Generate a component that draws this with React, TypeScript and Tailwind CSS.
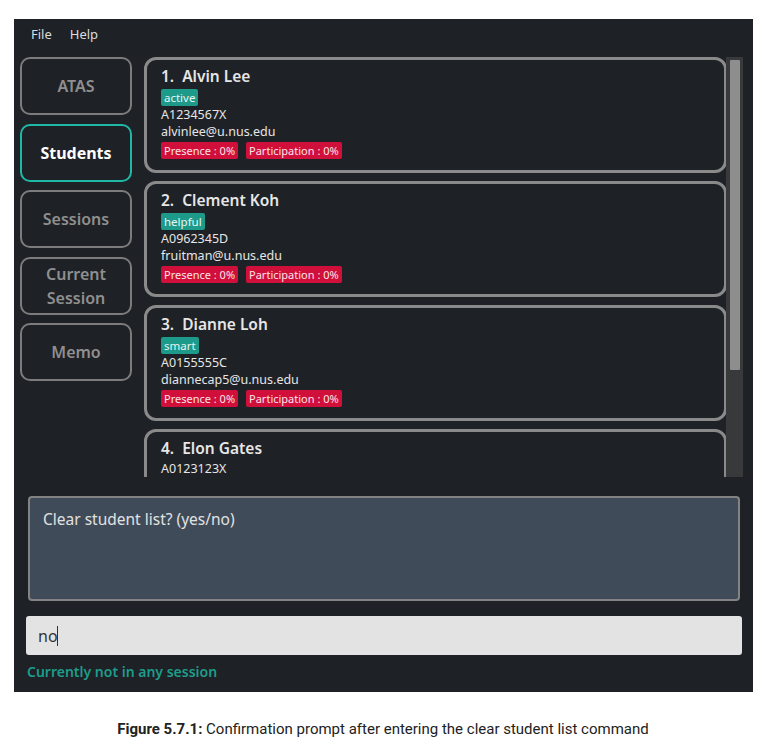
import React from "react";

const students = [
  { n: 1, name: "Alvin Lee", tag: "active", id: "A1234567X", email: "alvinlee@u.nus.edu" },
  { n: 2, name: "Clement Koh", tag: "helpful", id: "A0962345D", email: "fruitman@u.nus.edu" },
  { n: 3, name: "Dianne Loh", tag: "smart", id: "A0155555C", email: "diannecap5@u.nus.edu" },
];

function NavButton({ children, active }: { children: React.ReactNode; active?: boolean }) {
  return (
    <div
      className={
        active
          ? "h-[58px] w-[112px] rounded-[10px] border-[2px] border-[#1fb8a6] flex items-center justify-center text-center text-[16px] font-bold text-white leading-[24px]"
          : "h-[58px] w-[112px] rounded-[10px] border-[2px] border-[#7c7c7c] flex items-center justify-center text-center text-[16px] font-semibold text-[#8f8f8f] leading-[24px]"
      }
    >
      {children}
    </div>
  );
}

function Card({ s }: { s: (typeof students)[number] }) {
  return (
    <div className="h-[116px] shrink-0 rounded-[12px] border-[3px] border-[#8a8a8a] pl-[14px] pt-[6px] text-[#e6e6e6]">
      <div className="text-[15.5px] font-semibold leading-[20px] whitespace-pre">{`${s.n}.  ${s.name}`}</div>
      <div className="mt-[3px] flex">
        <span className="h-[17px] rounded-[2px] bg-[#1d9a89] px-[3px] text-[11.5px] leading-[17px] text-[#e8f5f3]">{s.tag}</span>
      </div>
      <div className="text-[12.5px] leading-[17px]">{s.id}</div>
      <div className="text-[12.5px] leading-[17px]">{s.email}</div>
      <div className="mt-[2px] flex gap-[8px]">
        <span className="h-[17px] rounded-[2px] bg-[#d0103a] px-[3px] text-[11px] leading-[17px] text-[#fbe3e8]">Presence : 0%</span>
        <span className="h-[17px] rounded-[2px] bg-[#d0103a] px-[3px] text-[11px] leading-[17px] text-[#fbe3e8]">Participation : 0%</span>
      </div>
    </div>
  );
}

export default function App() {
  return (
    <div className="w-[766px] h-[748px] bg-white pt-[19px] pl-[14px]" style={{ fontFamily: '"Noto Sans", "Open Sans", sans-serif' }}>
      <div className="w-[739px] h-[673px] bg-[#1e2125] flex flex-col">
        <div className="h-[30px] flex items-center gap-[18px] pl-[17px] pt-[2px] text-[13px] text-[#dcdcdc]">
          <span>File</span>
          <span>Help</span>
        </div>
        <div className="flex mt-[8px] pl-[6px] h-[420px]">
          <div className="flex flex-col gap-[8.5px] w-[112px]">
            <NavButton>ATAS</NavButton>
            <NavButton active>Students</NavButton>
            <NavButton>Sessions</NavButton>
            <NavButton>
              Current
              <br />
              Session
            </NavButton>
            <NavButton>Memo</NavButton>
          </div>
          <div className="ml-[12px] flex-1 flex overflow-hidden">
            <div className="w-[583px] flex flex-col gap-[8px] overflow-hidden">
              {students.map((s) => (
                <Card key={s.n} s={s} />
              ))}
              <div className="h-[116px] shrink-0 rounded-[12px] border-[3px] border-[#8a8a8a] pl-[14px] pt-[6px] text-[#e6e6e6]">
                <div className="text-[15.5px] font-semibold leading-[20px] whitespace-pre">{"4.  Elon Gates"}</div>
                <div className="text-[12.5px] leading-[17px] mt-[2px]">A0123123X</div>
              </div>
            </div>
            <div className="w-[17px] ml-[-1px] bg-[#38393b] pt-[3px] flex justify-center">
              <div className="w-[10px] h-[310px] bg-[#8e8e8e] rounded-[1px]" />
            </div>
          </div>
        </div>
        <div className="mt-[19px] ml-[14px] w-[712px] h-[105px] rounded-[4px] border-[2px] border-[#838383] bg-[#3f4b58] px-[13px] pt-[10px] text-[15.5px] leading-[22px] text-[#e2e2e2]">
          Clear student list? (yes/no)
        </div>
        <div className="mt-[15px] ml-[12px] w-[716px] h-[39px] rounded-[3px] bg-[#e3e3e3] flex items-center pl-[12px] text-[16px] text-[#333]">
          <span>no</span>
          <span className="w-[1px] h-[20px] bg-[#333] ml-[-1px]" />
        </div>
        <div className="mt-[7px] ml-[13px] text-[14px] font-semibold leading-[20px] text-[#1e9c8b]">Currently not in any session</div>
      </div>
      <div className="mt-[26px] ml-[-14px] w-[766px] text-center text-[15px] text-[#222]" style={{ fontFamily: 'Roboto, sans-serif' }}>
        <span className="font-bold">Figure 5.7.1:</span> Confirmation prompt after entering the clear student list command
      </div>
    </div>
  );
}
